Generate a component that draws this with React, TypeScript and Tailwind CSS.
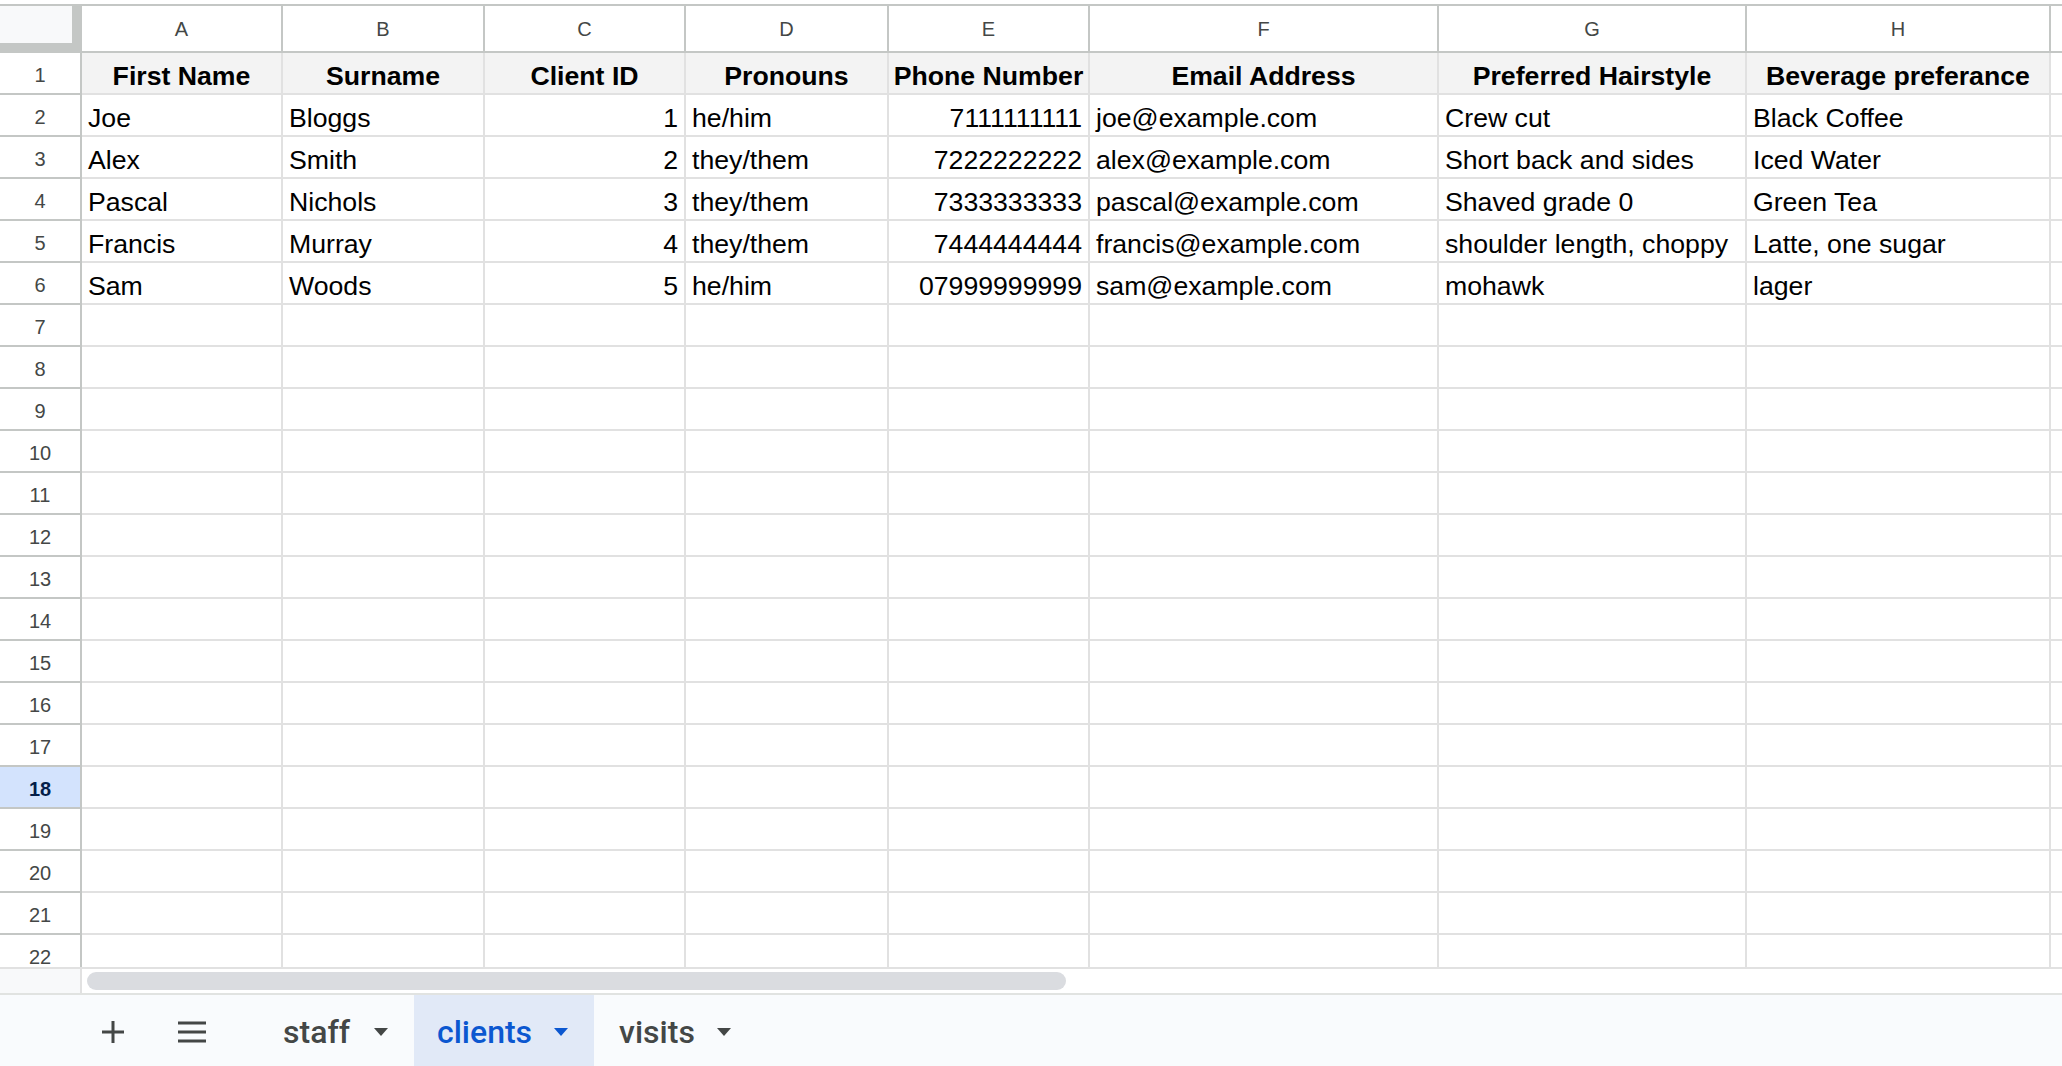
import React from "react";

const cols = [
  { letter: "A", w: "w-[201px]", title: "First Name", align: "left" },
  { letter: "B", w: "w-[202px]", title: "Surname", align: "left" },
  { letter: "C", w: "w-[201px]", title: "Client ID", align: "right" },
  { letter: "D", w: "w-[203px]", title: "Pronouns", align: "left" },
  { letter: "E", w: "w-[201px]", title: "Phone Number", align: "right" },
  { letter: "F", w: "w-[349px]", title: "Email Address", align: "left" },
  { letter: "G", w: "w-[308px]", title: "Preferred Hairstyle", align: "left" },
  { letter: "H", w: "w-[304px]", title: "Beverage preferance", align: "left" },
];

const rows = [
  ["Joe", "Bloggs", "1", "he/him", "7111111111", "joe@example.com", "Crew cut", "Black Coffee"],
  ["Alex", "Smith", "2", "they/them", "7222222222", "alex@example.com", "Short back and sides", "Iced Water"],
  ["Pascal", "Nichols", "3", "they/them", "7333333333", "pascal@example.com", "Shaved grade 0", "Green Tea"],
  ["Francis", "Murray", "4", "they/them", "7444444444", "francis@example.com", "shoulder length, choppy", "Latte, one sugar"],
  ["Sam", "Woods", "5", "he/him", "07999999999", "sam@example.com", "mohawk", "lager"],
];

const Caret = ({ color }: { color: string }) => (
  <svg width="14" height="8" viewBox="0 0 14 8">
    <path d="M0 0 L14 0 L7 8 Z" fill={color} />
  </svg>
);

const RowHeader = ({ n }: { n: number }) => {
  const selected = n === 18;
  return (
    <div
      className={
        "w-[82px] shrink-0 h-full flex items-center justify-center pt-[3px] border-r-2 border-b-2 border-[#c4c7c5] text-[20px] " +
        (selected ? "bg-[#d3e3fd] text-[#041e49] font-bold" : "bg-white text-[#444746]")
      }
    >
      {n}
    </div>
  );
};

const Sheet = () => (
  <div className="h-[969px] shrink-0 flex flex-col overflow-hidden">
    <div className="h-[4px] shrink-0 bg-white" />
    <div className="h-[2px] shrink-0 bg-[#c4c7c5]" />
    {/* column letters */}
    <div className="h-[47px] shrink-0 flex border-b-2 border-[#c4c7c5]">
      <div className="w-[82px] shrink-0 h-full bg-[#c4c7c5] flex items-start">
        <div className="w-[72px] h-[37px] bg-[#f8f9fa]" />
      </div>
      {cols.map((c) => (
        <div
          key={c.letter}
          className={c.w + " shrink-0 h-full flex items-center justify-center border-r-2 border-[#c4c7c5] text-[20px] text-[#444746]"}
        >
          {c.letter}
        </div>
      ))}
      <div className="flex-1" />
    </div>
    <div className="flex-1 min-h-0 overflow-hidden border-b-2 border-[#e1e1e1]">
      {/* row 1 headings */}
      <div className="h-[42px] flex">
        <RowHeader n={1} />
        {cols.map((c) => (
          <div
            key={c.letter}
            className={c.w + " shrink-0 h-full flex items-end justify-center leading-[25px] pb-[4px] bg-[#f3f3f3] border-r-2 border-b-2 border-[#e1e1e1] font-bold text-black whitespace-nowrap"}
          >
            {c.title}
          </div>
        ))}
        <div className="flex-1 border-b-2 border-[#e1e1e1]" />
      </div>
      {Array.from({ length: 21 }).map((_, i) => {
        const data = rows[i];
        return (
          <div key={i} className="h-[42px] flex">
            <RowHeader n={i + 2} />
            {cols.map((c, j) => (
              <div
                key={c.letter}
                className={
                  c.w +
                  " shrink-0 h-full flex items-end leading-[25px] pb-[4px] px-[6px] border-r-2 border-b-2 border-[#e1e1e1] text-black whitespace-nowrap " +
                  (c.align === "right" ? "justify-end" : "justify-start")
                }
              >
                {data ? data[j] : ""}
              </div>
            ))}
            <div className="flex-1 border-b-2 border-[#e1e1e1]" />
          </div>
        );
      })}
    </div>
  </div>
);

const TabBar = () => (
  <div className="h-[73px] shrink-0 bg-[#f9fbfd] border-t-2 border-[#e1e3e1] flex items-stretch font-['Roboto',sans-serif] font-medium text-[32px]">
    <div className="w-[70px] shrink-0" />
    <div className="w-[86px] shrink-0 flex items-center justify-center pt-[2px]">
      <svg width="24" height="24" viewBox="0 0 24 24">
        <path d="M12 1 V23 M1 12 H23" stroke="#444746" strokeWidth="3" />
      </svg>
    </div>
    <div className="w-[72px] shrink-0 flex items-center justify-center pt-[2px]">
      <svg width="28" height="22" viewBox="0 0 28 22">
        <path d="M0 2 H28 M0 11 H28 M0 20 H28" stroke="#444746" strokeWidth="3" />
      </svg>
    </div>
    <div className="w-[30px] shrink-0" />
    <div className="flex items-center gap-[24px] pl-[25px] pr-[26px] pt-[3px] text-[#444746]">
      <span>staff</span>
      <Caret color="#444746" />
    </div>
    <div className="flex items-center gap-[22px] pl-[23px] pr-[26px] pt-[3px] bg-[#e1e9f7] text-[#0b57d0]">
      <span>clients</span>
      <Caret color="#0b57d0" />
    </div>
    <div className="flex items-center gap-[22px] pl-[25px] pr-[26px] pt-[3px] text-[#444746]">
      <span>visits</span>
      <Caret color="#444746" />
    </div>
  </div>
);

export default function App() {
  return (
    <div className="w-[2062px] h-[1066px] bg-white flex flex-col overflow-hidden font-['Liberation_Sans',Arial,sans-serif] text-[26.67px]">
      <Sheet />
      <div className="h-[24px] shrink-0 flex items-center">
        <div className="w-[82px] h-full shrink-0 bg-[#f8f9fa] border-r-2 border-[#e1e1e1]" />
        <div className="w-[5px] shrink-0" />
        <div className="w-[979px] h-[18px] rounded-full bg-[#dadce0]" />
      </div>
      <TabBar />
    </div>
  );
}
